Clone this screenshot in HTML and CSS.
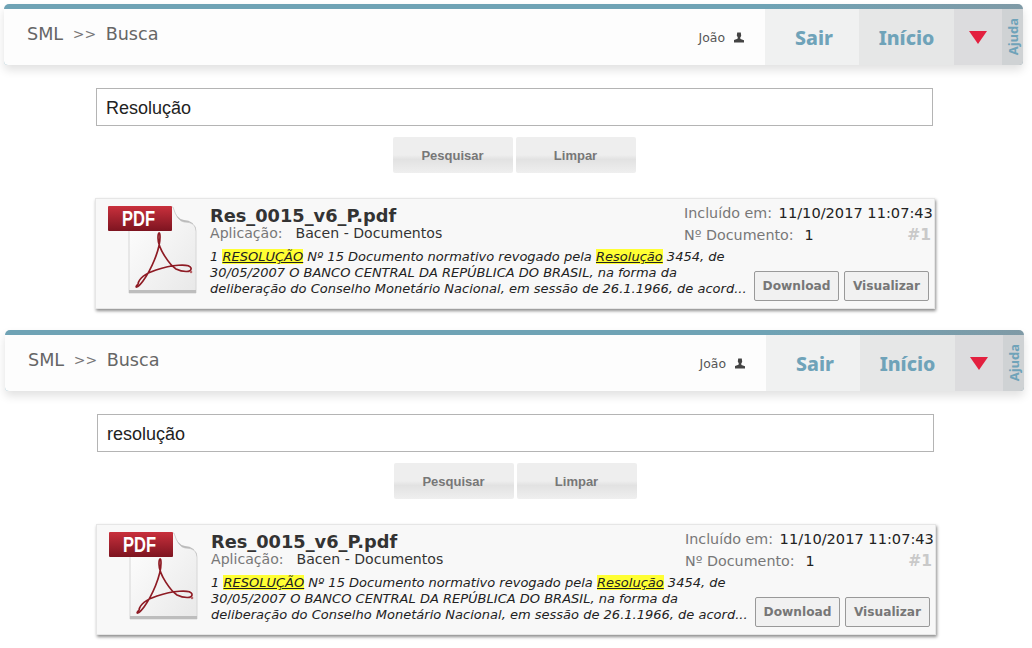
FILE: index.html
```html
<!DOCTYPE html>
<html lang="pt">
<head>
<meta charset="utf-8">
<title>SML Busca</title>
<link rel="stylesheet" href="styles.css">
</head>
<body>
<section class="shot shot-first">
  <header class="bar">
    <div class="crumbs"><span>SML</span><span class="sep">&gt;&gt;</span><span>Busca</span></div>
    <div class="user">João
      <svg class="user-icon" viewBox="0 0 12 11" width="12" height="11"><path d="M4.2 0.5h3.6l.4 3.2-1 2 .3 1.3 3.5 1.2v2.3H1V8l3.5-1.2.3-1.3-1-2z" fill="#444"/></svg>
    </div>
    <a class="nav nav-sair">Sair</a>
    <a class="nav nav-inicio">Início</a>
    <div class="nav-arrow"><span class="tri"></span></div>
    <div class="nav-help"><span>Ajuda</span></div>
  </header>
  <div class="search"><div class="input">Resolução</div></div>
  <div class="actions"><button class="btn">Pesquisar</button><button class="btn">Limpar</button></div>
  <article class="card">
    <svg class="pdf" viewBox="0 0 92 90" width="92" height="90">
      <defs>
        <linearGradient id="pg1" x1="0" y1="0" x2="0" y2="1"><stop offset="0" stop-color="#c9303c"/><stop offset="1" stop-color="#7d1420"/></linearGradient>
        <linearGradient id="pp1" x1="0" y1="0" x2="1" y2="1"><stop offset="0" stop-color="#fff"/><stop offset="1" stop-color="#e8e8e8"/></linearGradient>
      </defs>
      <path d="M21 2H65Q69 16 76 17Q88 17 88 26V88H21z" fill="url(#pp1)" stroke="#d6d6d6"/>
      <path d="M65 2Q69 16 76 17Q88 17 88 26Q86 15 76 15Q68 14 65 2z" fill="#bbb"/>
      <rect x="21" y="85" width="67" height="3" fill="#bdbdbd"/>
      <rect x="0" y="1" width="64" height="25" rx="1" fill="url(#pg1)"/>
      <text x="14" y="21" class="pdf-label" textLength="33" lengthAdjust="spacingAndGlyphs">PDF</text>
      <path d="M30 79C26 83 29 84 35 76C43 65 52 45 52 32C52 26 50 27 50 33C50 44 62 60 68 64C74 67 84 68 83 63C81 58 63 60 48 65C39 68 31 73 30 79Z" fill="none" stroke="#8e1b24" stroke-width="1.7"/>
      <circle cx="83" cy="67" r="1.3" fill="#b9656a"/>
    </svg>
    <div class="body">
      <div class="top">
        <div class="heading">
          <h2 class="name">Res_0015_v6_P.pdf</h2>
          <p class="app"><span class="label">Aplicação:</span><span class="app-value">Bacen - Documentos</span></p>
        </div>
        <div class="meta">
          <p class="meta-row"><span class="label">Incluído em:</span> <span class="date">11/10/2017 11:07:43</span></p>
          <p class="meta-row meta-doc"><span><span class="label">Nº Documento:</span><span class="doc-num">1</span></span><span class="rank">#1</span></p>
        </div>
      </div>
      <div class="bottom">
        <p class="excerpt">1 <mark>RESOLUÇÃO</mark> Nº 15 Documento normativo revogado pela <mark>Resolução</mark> 3454, de<br>30/05/2007 O BANCO CENTRAL DA REPÚBLICA DO BRASIL, na forma da<br>deliberação do Conselho Monetário Nacional, em sessão de 26.1.1966, de acord...</p>
        <div class="card-actions"><button class="card-btn">Download</button><button class="card-btn">Visualizar</button></div>
      </div>
    </div>
  </article>
</section>
<section class="shot shot-second">
  <header class="bar">
    <div class="crumbs"><span>SML</span><span class="sep">&gt;&gt;</span><span>Busca</span></div>
    <div class="user">João
      <svg class="user-icon" viewBox="0 0 12 11" width="12" height="11"><path d="M4.2 0.5h3.6l.4 3.2-1 2 .3 1.3 3.5 1.2v2.3H1V8l3.5-1.2.3-1.3-1-2z" fill="#444"/></svg>
    </div>
    <a class="nav nav-sair">Sair</a>
    <a class="nav nav-inicio">Início</a>
    <div class="nav-arrow"><span class="tri"></span></div>
    <div class="nav-help"><span>Ajuda</span></div>
  </header>
  <div class="search"><div class="input">resolução</div></div>
  <div class="actions"><button class="btn">Pesquisar</button><button class="btn">Limpar</button></div>
  <article class="card">
    <svg class="pdf" viewBox="0 0 92 90" width="92" height="90">
      <defs>
        <linearGradient id="pg2" x1="0" y1="0" x2="0" y2="1"><stop offset="0" stop-color="#c9303c"/><stop offset="1" stop-color="#7d1420"/></linearGradient>
        <linearGradient id="pp2" x1="0" y1="0" x2="1" y2="1"><stop offset="0" stop-color="#fff"/><stop offset="1" stop-color="#e8e8e8"/></linearGradient>
      </defs>
      <path d="M21 2H65Q69 16 76 17Q88 17 88 26V88H21z" fill="url(#pp2)" stroke="#d6d6d6"/>
      <path d="M65 2Q69 16 76 17Q88 17 88 26Q86 15 76 15Q68 14 65 2z" fill="#bbb"/>
      <rect x="21" y="85" width="67" height="3" fill="#bdbdbd"/>
      <rect x="0" y="1" width="64" height="25" rx="1" fill="url(#pg2)"/>
      <text x="14" y="21" class="pdf-label" textLength="33" lengthAdjust="spacingAndGlyphs">PDF</text>
      <path d="M30 79C26 83 29 84 35 76C43 65 52 45 52 32C52 26 50 27 50 33C50 44 62 60 68 64C74 67 84 68 83 63C81 58 63 60 48 65C39 68 31 73 30 79Z" fill="none" stroke="#8e1b24" stroke-width="1.7"/>
      <circle cx="83" cy="67" r="1.3" fill="#b9656a"/>
    </svg>
    <div class="body">
      <div class="top">
        <div class="heading">
          <h2 class="name">Res_0015_v6_P.pdf</h2>
          <p class="app"><span class="label">Aplicação:</span><span class="app-value">Bacen - Documentos</span></p>
        </div>
        <div class="meta">
          <p class="meta-row"><span class="label">Incluído em:</span> <span class="date">11/10/2017 11:07:43</span></p>
          <p class="meta-row meta-doc"><span><span class="label">Nº Documento:</span><span class="doc-num">1</span></span><span class="rank">#1</span></p>
        </div>
      </div>
      <div class="bottom">
        <p class="excerpt">1 <mark>RESOLUÇÃO</mark> Nº 15 Documento normativo revogado pela <mark>Resolução</mark> 3454, de<br>30/05/2007 O BANCO CENTRAL DA REPÚBLICA DO BRASIL, na forma da<br>deliberação do Conselho Monetário Nacional, em sessão de 26.1.1966, de acord...</p>
        <div class="card-actions"><button class="card-btn">Download</button><button class="card-btn">Visualizar</button></div>
      </div>
    </div>
  </article>
</section>
```

FILE: styles.css
```css
* { box-sizing: border-box; }
html, body { margin: 0; padding: 0; background: #fff; overflow: hidden; }
body { width: 1032px; height: 648px; font-family: "DejaVu Sans", Verdana, sans-serif; }
p, h2 { margin: 0; }

.shot { width: 1019px; }
.shot-first { margin: 4px 0 0 4px; height: 326px; }
.shot-second { margin: 0 0 0 5px; }

.bar {
  display: flex;
  align-items: stretch;
  height: 61px;
  padding-top: 5px;
  border-radius: 5px 5px 4px 4px;
  background: linear-gradient(to right, #6fa3b5 0, #6fa3b5 75%, #7f9aa6 100%);
  box-shadow: 0 5px 10px rgba(0, 0, 0, 0.12);
  overflow: hidden;
}
.crumbs {
  flex: 1;
  display: flex;
  align-items: center;
  gap: 9.5px;
  padding: 0 0 6px 23px;
  font-size: 17.6px;
  color: #666;
  background: #fdfdfd;
}
.sep { font-size: 14px; color: #777; letter-spacing: 0; }
.user {
  display: flex;
  align-items: center;
  gap: 8px;
  padding: 0 20px 0 0;
  font-size: 12.4px;
  color: #555;
  background: #fdfdfd;
}
.user-icon { display: block; }
.nav {
  display: flex;
  align-items: center;
  justify-content: center;
  width: 95px;
  font-family: "Noto Sans", sans-serif;
  font-size: 19.5px;
  font-weight: 800;
  color: #6fa3b9;
}
.nav-sair { background: #f0f1f1; width: 94px; padding-left: 4px; }
.nav-inicio { background: #e6e7e7; }
.nav-arrow {
  display: flex;
  align-items: center;
  justify-content: center;
  width: 48px;
  background: #dcdcde;
}
.tri {
  width: 0;
  height: 0;
  border-left: 9px solid transparent;
  border-right: 9px solid transparent;
  border-top: 13px solid #e3203f;
}
.nav-help {
  display: flex;
  align-items: center;
  justify-content: center;
  width: 21px;
  background: #cfd2d4;
}
.nav-help span {
  writing-mode: vertical-rl;
  transform: rotate(180deg);
  font-family: "Noto Sans", sans-serif;
  font-size: 13px;
  font-weight: 700;
  color: #6fa3b9;
}

.search { padding: 23px 90px 0 92px; }
.input {
  height: 38px;
  padding: 2px 9px 0;
  display: flex;
  align-items: center;
  border: 1px solid #b4b4b4;
  background: #fff;
  font-family: "Liberation Sans", Arial, sans-serif;
  font-size: 18px;
  color: #222;
}

.actions {
  display: flex;
  justify-content: center;
  gap: 3px;
  margin: 11px 0 0 1px;
}
.btn {
  width: 120px;
  height: 36px;
  border: 0;
  border-radius: 2px;
  background: linear-gradient(#eeeeee 0, #eeeeee 50%, #e2e2e2 62%, #efefef 100%);
  font-family: "Liberation Sans", Arial, sans-serif;
  font-size: 13px;
  font-weight: 700;
  color: #777;
}

.card {
  display: flex;
  width: 840px;
  height: 111px;
  margin: 25px 0 0 91px;
  padding: 6px 0 0 12px;
  background: #f8f8f8;
  border: 1px solid #e6e6e6;
  box-shadow: 1px 2px 3px rgba(0, 0, 0, 0.45);
}
.pdf { flex: none; display: block; margin-right: 10px; }
.pdf-label {
  font-family: "Liberation Sans", Arial, sans-serif;
  font-size: 22px;
  font-weight: 700;
  fill: #fff;
}
.body { flex: 1; min-width: 0; }
.top { display: flex; justify-content: space-between; height: 43px; }
.heading { padding-top: 1px; }
.name { font-size: 17.8px; line-height: 20px; font-weight: 700; color: #333; }
.app { font-size: 14.1px; line-height: 17px; margin-top: -1px; color: #333; }
.label { color: #777; }
.app-value { margin-left: 13px; }
.meta { width: 250px; margin-top: -3px; font-size: 14.3px; }
.meta-row { line-height: 22px; color: #222; white-space: nowrap; }
.date { font-size: 14.6px; margin-left: 2px; }
.meta-doc { display: flex; justify-content: space-between; padding-right: 3px; }
.doc-num { margin-left: 11px; }
.rank { font-size: 15.5px; font-weight: 700; color: #c9c9c9; }
.bottom { display: flex; justify-content: space-between; padding-right: 5px; }
.excerpt {
  font-size: 13.02px;
  line-height: 16px;
  font-style: italic;
  color: #222;
  white-space: nowrap;
  margin-top: 1px;
}
mark { background: #ffff33; color: inherit; text-decoration: underline; }
.card-actions { display: flex; gap: 5px; margin-top: 23px; flex: none; }
.card-btn {
  width: 85px;
  height: 30px;
  padding: 0;
  border: 1px solid #999;
  border-radius: 2px;
  background: #f1f1f1;
  font-family: "DejaVu Sans", Verdana, sans-serif;
  font-size: 12.2px;
  font-weight: 700;
  color: #777;
}
```
